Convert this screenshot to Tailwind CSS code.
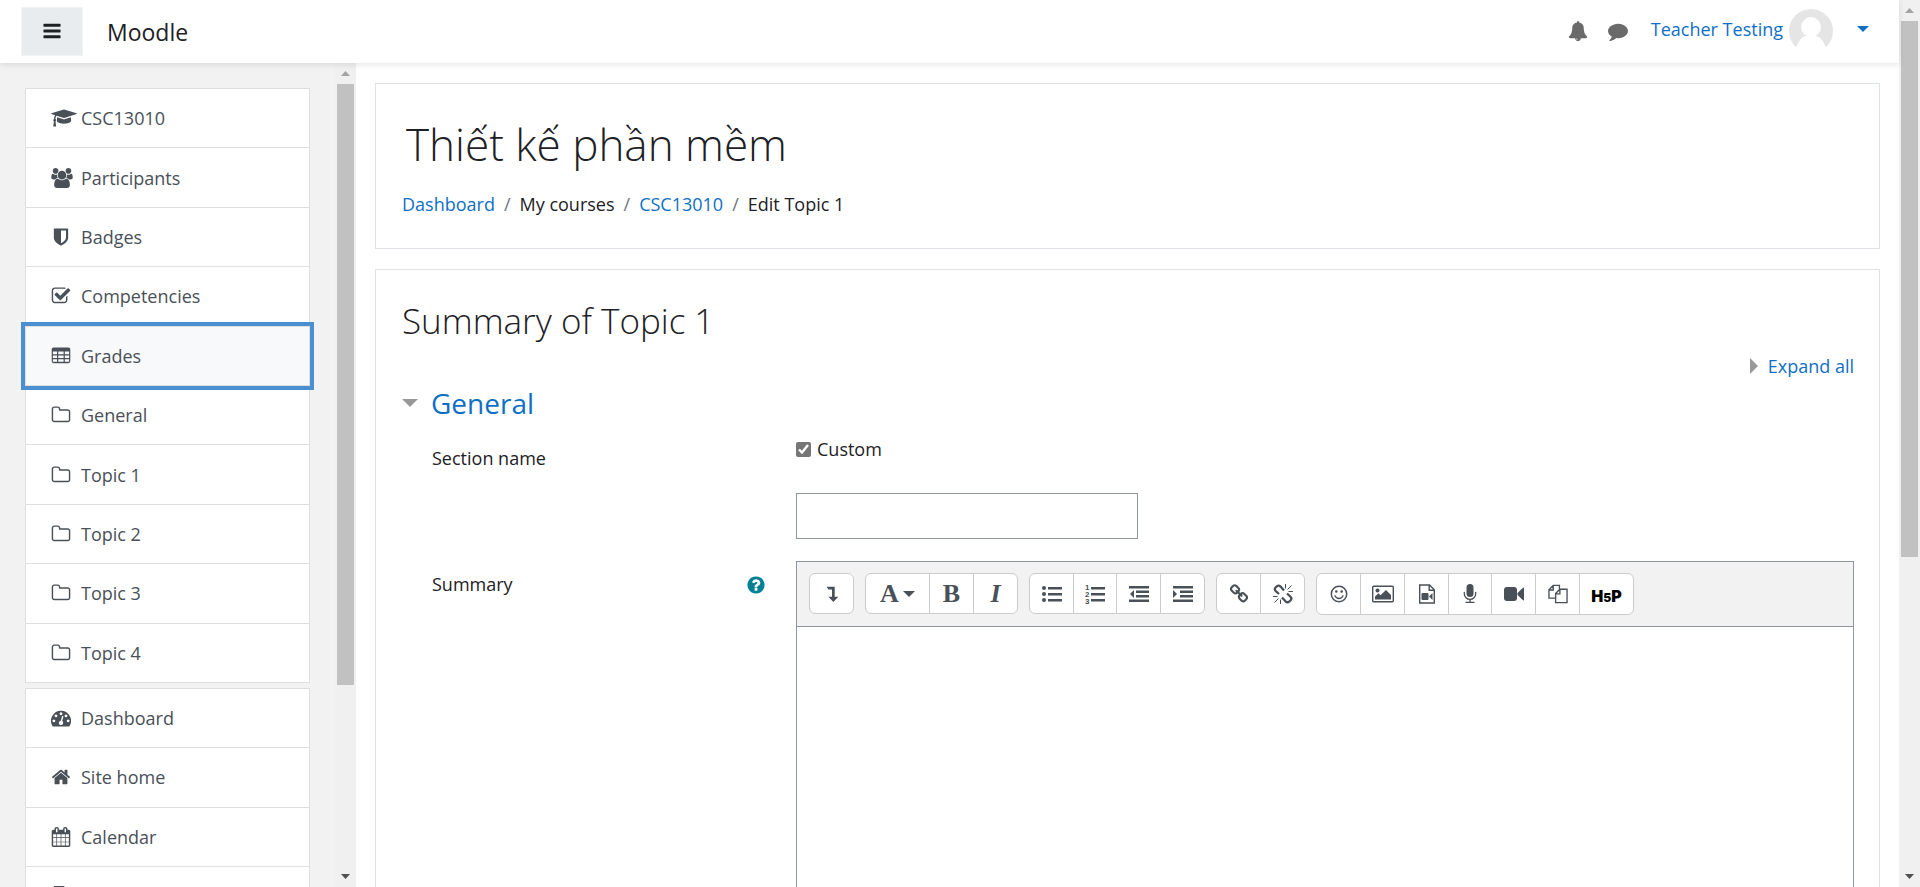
<!DOCTYPE html>
<html lang="en">
<head>
<meta charset="utf-8">
<meta name="viewport" content="width=device-width, initial-scale=1">
<title>Edit Topic 1</title>
<script src="https://cdn.jsdelivr.net/npm/@tailwindcss/browser@4"></script>
</head>
<body class="flex h-screen overflow-hidden bg-white font-['Open_Sans','Noto_Sans',sans-serif] text-lg leading-7 text-[#1d2125]">

<svg class="hidden" aria-hidden="true">
  <symbol id="bars" viewBox="0 0 1792 1792"><path d="M1664 1344v128q0 26-19 45t-45 19h-1408q-26 0-45-19t-19-45v-128q0-26 19-45t45-19h1408q26 0 45 19t19 45zm0-512v128q0 26-19 45t-45 19h-1408q-26 0-45-19t-19-45v-128q0-26 19-45t45-19h1408q26 0 45 19t19 45zm0-512v128q0 26-19 45t-45 19h-1408q-26 0-45-19t-19-45v-128q0-26 19-45t45-19h1408q26 0 45 19t19 45z"/></symbol>
  <symbol id="cap" viewBox="0 0 2304 1792"><path d="M1774 836l18 316q4 69-82 128t-235 93.5-323 34.5-323-34.5-235-93.5-82-128l18-316 574 181q22 7 48 7t48-7zm530-324q0 23-22 31l-1120 352q-4 1-10 1t-10-1l-652-206q-43 34-71 111.500t-34 178.500q63 36 63 109 0 69-58 107l58 433q2 14-8 25-9 11-24 11h-192q-15 0-24-11-10-11-8-25l58-433q-58-38-58-107 0-73 65-111 11-207 98-330l-333-104q-22-8-22-31t22-31l1120-352q4-1 10-1t10 1l1120 352q22 8 22 31z"/></symbol>
  <symbol id="users" viewBox="-64 0 1920 1792"><path d="M529 896q-162 5-265 128h-134q-82 0-138-40.500t-56-118.500q0-353 124-353 6 0 43.500 21t97.500 42.500 119 21.500q67 0 133-23-5 37-5 66 0 139 81 256zm1071 637q0 120-73 189.500t-194 69.500h-874q-121 0-194-69.500t-73-189.500q0-53 3.500-103.500t14-109 26.500-108.500 43-97.500 62-81 85.500-53.500 111.500-20q10 0 43 21.500t73 48 107 48 135 21.500 135-21.500 107-48 73-48 43-21.500q61 0 111.500 20t85.500 53.500 62 81 43 97.500 26.500 108.500 14 109 3.500 103.500zm-1024-1277q0 106-75 181t-181 75-181-75-75-181 75-181 181-75 181 75 75 181zm704 384q0 159-112.500 271.500t-271.500 112.500-271.500-112.500-112.500-271.500 112.500-271.500 271.500-112.500 271.500 112.500 112.500 271.500zm576 225q0 78-56 118.500t-138 40.500h-134q-103-123-265-128 81-117 81-256 0-29-5-66 66 23 133 23 59 0 119-21.500t97.500-42.500 43.500-21q124 0 124 353zm-128-609q0 106-75 181t-181 75-181-75-75-181 75-181 181-75 181 75 75 181z"/></symbol>
  <symbol id="shield" viewBox="0 0 1792 1792"><path d="M1344 960v-640h-448v1137q119-63 213-137 235-184 235-360zm192-768v768q0 86-33.500 170.500t-83 150-118 127.500-126.500 103-121 77.500-89.500 49.500-42.500 20q-12 6-26 6t-26-6q-16-7-42.500-20t-89.500-49.500-121-77.500-126.500-103-118-127.500-83-150-33.500-170.500v-768q0-26 19-45t45-19h1152q26 0 45 19t19 45z"/></symbol>
  <symbol id="check" viewBox="0 0 1792 1792"><path d="M1472 930v318q0 119-84.500 203.500t-203.500 84.500h-832q-119 0-203.500-84.500t-84.500-203.500v-832q0-119 84.500-203.500t203.500-84.500h832q63 0 117 25 15 7 18 23 3 17-9 29l-49 49q-10 10-23 10-3 0-9-2-23-6-45-6h-832q-66 0-113 47t-47 113v832q0 66 47 113t113 47h832q66 0 113-47t47-113v-254q0-13 9-22l64-64q10-10 23-10 6 0 12 3 20 8 20 29zm231-489l-814 814q-24 24-57 24t-57-24l-430-430q-24-24-24-57t24-57l110-110q24-24 57-24t57 24l263 263 647-647q24-24 57-24t57 24l110 110q24 24 24 57t-24 57z"/></symbol>
  <symbol id="table" viewBox="0 0 1792 1792"><path fill-rule="evenodd" d="M224 128h1344q160 0 160 160v1088q0 160-160 160h-1344q-160 0-160-160v-1088q0-160 160-160zM170 500v240h370v-240zM650 500v240h480v-240zM1240 500v240h380v-240zM170 840v240h370v-240zM650 840v240h480v-240zM1240 840v240h380v-240zM170 1180v240h370v-240zM650 1180v240h480v-240zM1240 1180v240h380v-240z"/></symbol>
  <symbol id="folder" viewBox="0 0 1792 1792"><path d="M1600 1312v-704q0-40-28-68t-68-28h-704q-40 0-68-28t-28-68v-64q0-40-28-68t-68-28h-320q-40 0-68 28t-28 68v960q0 40 28 68t68 28h1216q40 0 68-28t28-68zm128-704v704q0 92-66 158t-158 66h-1216q-92 0-158-66t-66-158v-960q0-92 66-158t158-66h320q92 0 158 66t66 158v32h672q92 0 158 66t66 158z"/></symbol>
  <symbol id="dash" viewBox="0 0 1792 1792"><path fill-rule="evenodd" d="M896 256a896 896 0 0 1 755 1378q-19 30-54 30h-1402q-35 0-54-30A896 896 0 0 1 896 256zM256 1024a128 128 0 1 0 1 0zM448 576a128 128 0 1 0 1 0zM896 384a128 128 0 1 0 1 0zM1344 576a128 128 0 1 0 1 0zM1536 1024a128 128 0 1 0 1 0zM1004 1173l101-382q6-26-7.500-48.500t-38.500-29.500-48 6.500-30 39.500l-101 382q-60 5-107 43.500t-63 98.500q-20 77 20 146t117 89 146-20 89-117q16-60-6-117t-72-91z"/></symbol>
  <symbol id="home" viewBox="0 0 1792 1792"><path d="M1472 992v480q0 26-19 45t-45 19h-384v-384h-256v384h-384q-26 0-45-19t-19-45v-480l576-480 575 474q1 2 1 6zm223-69l-62 74q-8 9-21 11h-3q-13 0-21-7l-692-577-692 577q-12 8-24 7-13-2-21-11l-62-74q-8-10-7-23.500t11-21.500l719-599q32-26 76-26t76 26l244 204v-195q0-14 9-23t23-9h192q14 0 23 9t9 23v408l219 182q10 8 11 21.500t-7 23.500z"/></symbol>
  <symbol id="calendar" viewBox="0 0 1792 1792"><path d="M192 1664h288v-288h-288v288zm352 0h320v-288h-320v288zm-352-352h288v-320h-288v320zm352 0h320v-320h-320v320zm-352-384h288v-288h-288v288zm736 736h320v-288h-320v288zm-384-736h320v-288h-320v288zm768 736h288v-288h-288v288zm-384-352h320v-320h-320v320zm-352-864v-288q0-13-9.500-22.500t-22.500-9.500h-64q-13 0-22.500 9.500t-9.500 22.500v288q0 13 9.500 22.500t22.500 9.500h64q13 0 22.500-9.500t9.500-22.500zm736 864h288v-320h-288v320zm-384-384h320v-288h-320v288zm384 0h288v-288h-288v288zm32-480v-288q0-13-9.500-22.500t-22.500-9.500h-64q-13 0-22.500 9.500t-9.500 22.500v288q0 13 9.500 22.500t22.500 9.500h64q13 0 22.500-9.500t9.500-22.500zm384-64v1280q0 52-38 90t-90 38h-1408q-52 0-90-38t-38-90v-1280q0-52 38-90t90-38h128v-96q0-66 47-113t113-47h64q66 0 113 47t47 113v96h384v-96q0-66 47-113t113-47h64q66 0 113 47t47 113v96h128q52 0 90 38t38 90z"/></symbol>
  <symbol id="file" viewBox="0 0 1792 1792"><path d="M256 0h896l384 384v1344h-1280zM384 160v1440h1024v-1088h-384v-352z" fill-rule="evenodd"/></symbol>
  <symbol id="bell" viewBox="0 0 1792 1792"><path d="M912 1696q0-16-16-16-59 0-101.500-42.500t-42.500-101.500q0-16-16-16t-16 16q0 73 51.500 124.500t124.500 51.500q16 0 16-16zm816-288q0 52-38 90t-90 38h-448q0 106-75 181t-181 75-181-75-75-181h-448q-52 0-90-38t-38-90q50-42 91-88t85-119.500 74.500-158.500 50-206 19.500-260q0-152 117-282.500t307-158.500q-8-19-8-39 0-40 28-68t68-28 68 28 28 68q0 20-8 39 190 28 307 158.500t117 282.500q0 139 19.500 260t50 206 74.500 158.500 85 119.500 91 88z"/></symbol>
  <symbol id="comment" viewBox="0 0 1792 1792"><path d="M1792 896q0 174-120 321.500t-326 233-450 85.500q-70 0-145-8-198 175-460 242-49 14-114 22-17 2-30.500-9t-17.500-29v-1q-3-4-.5-12t2-10 4.500-9.500l6-9 7-8.500 8-9q7-8 31-34.500t34.500-38 31-39.500 32.500-51 27-59 26-76q-157-89-247.500-220t-90.500-281q0-130 71-248.500t191-204.500 286-136.500 348-50.500q244 0 450 85.500t326 233 120 321.500z"/></symbol>
  <symbol id="help" viewBox="0 0 1792 1792"><path d="M1024 1376v-192q0-14-9-23t-23-9h-192q-14 0-23 9t-9 23v192q0 14 9 23t23 9h192q14 0 23-9t9-23zm256-672q0-88-55.500-163t-138.500-116-170-41q-243 0-371 213-15 24 8 42l132 100q7 6 19 6 16 0 25-12 53-68 86-92 34-24 86-24 48 0 85.500 26t37.500 59q0 38-20 61t-68 45q-63 28-115.500 86.500t-52.500 125.500v36q0 14 9 23t23 9h192q14 0 23-9t9-23q0-19 21.500-49.500t54.500-49.500q32-18 49-28.500t46-35 44.500-48 28-60.500 12.500-81zm384 192q0 209-103 385.500t-279.500 279.500-385.500 103-385.500-103-279.500-279.500-103-385.500 103-385.500 279.500-279.500 385.500-103 385.500 103 279.500 279.500 103 385.500z"/></symbol>
  <symbol id="down" viewBox="0 0 20 20"><path d="M4 2h9v11h4l-5.500 6L6 13h4V5H6z"/></symbol>
  <symbol id="ul" viewBox="0 0 20 20"><circle cx="2" cy="4" r="2"/><circle cx="2" cy="10" r="2"/><circle cx="2" cy="16" r="2"/><path d="M6 3h14v2.500H6zM6 9h14v2.500H6zM6 15h14v2.500H6z"/></symbol>
  <symbol id="ol" viewBox="0 0 20 20"><path d="M6 3h14v2.500H6zM6 9h14v2.500H6zM6 15h14v2.500H6z"/><g font-family="Liberation Sans" font-weight="700" font-size="8"><text x="0" y="6">1</text><text x="0" y="13">2</text><text x="0" y="20">3</text></g></symbol>
  <symbol id="outdent" viewBox="0 0 20 20"><path d="M0 2h20v2.500H0zM7 6.500h13V9H7zM7 11h13v2.500H7zM0 15.500h20V18H0zM5 6v8L1 10z"/></symbol>
  <symbol id="indent" viewBox="0 0 20 20"><path d="M0 2h20v2.500H0zM7 6.500h13V9H7zM7 11h13v2.500H7zM0 15.500h20V18H0zM0 6v8l4-4z"/></symbol>
  <symbol id="link" viewBox="0 0 1792 1792"><path d="M1520 1216q0-40-28-68l-208-208q-28-28-68-28-42 0-72 32 3 3 19 18.500t21.500 21.500 15 19 13 25.500 3.500 27.500q0 40-28 68t-68 28q-15 0-27.500-3.500t-25.500-13-19-15-21.500-21.500-18.500-19q-33 31-33 73 0 40 28 68l206 207q27 27 68 27 40 0 68-26l147-146q28-28 28-67zm-703-705q0-40-28-68l-206-207q-28-28-68-28-39 0-68 27l-147 146q-28 28-28 67 0 40 28 68l208 208q27 27 68 27 42 0 72-31-3-3-19-18.500t-21.500-21.500-15-19-13-25.500-3.500-27.500q0-40 28-68t68-28q15 0 27.500 3.500t25.500 13 19 15 21.500 21.500 18.500 19q33-31 33-73zm895 705q0 120-85 203l-147 146q-83 83-203 83-121 0-204-85l-206-207q-83-83-83-203 0-123 88-209l-88-88q-86 88-208 88-120 0-204-84l-208-208q-84-84-84-204t85-203l147-146q83-83 203-83 121 0 204 85l206 207q83 83 83 203 0 123-88 209l88 88q86-88 208-88 120 0 204 84l208 208q84 84 84 204z"/></symbol>
  <symbol id="unlink" viewBox="0 0 20 20"><g fill="none" stroke="currentColor"><path stroke-width="2.300" d="M6 10 2.700 7Q1 5.200 2.600 3.500L4 2.200Q5.800.8 7.600 2.600L11 6.500M9 13.500l3.500 3.800q1.900 1.700 3.700.3l1.400-1.400q1.600-1.700-.1-3.500L14 9.500"/><path stroke-width="1" d="M12.500 0v4.500M18.500 1.500l-4 4M15.500 7.500H20M7.500 15.500V20M5.500 14.500l-4 4M0 12.500h4.500"/></g></symbol>
  <symbol id="smile" viewBox="0 0 20 20"><circle cx="10" cy="10" r="7.700" fill="none" stroke="currentColor" stroke-width="1.500"/><circle cx="7.300" cy="7.500" r="1.300"/><circle cx="12.700" cy="7.500" r="1.300"/><path d="M6 11.800q1.200 2.700 4 2.700t4-2.700" fill="none" stroke="currentColor" stroke-width="1.300" stroke-linecap="round"/></symbol>
  <symbol id="image" viewBox="0 0 22 20"><rect x=".7" y="2.200" width="20.600" height="15.600" rx="1" fill="none" stroke="currentColor" stroke-width="1.400"/><circle cx="5.500" cy="6.500" r="2"/><path d="M3 15.500v-3l3.500-3.200 2 2L14 6l5 5v4.500z"/></symbol>
  <symbol id="filevideo" viewBox="0 0 20 20"><path d="M2.700 1h9.800l4.800 4.800V19H2.700zM12.200 1v5.200h5" fill="none" stroke="currentColor" stroke-width="1.400"/><rect x="4.500" y="9" width="7" height="7" rx="1"/><path d="M12 12.500 15.500 9v7z"/></symbol>
  <symbol id="mic" viewBox="0 0 20 20"><rect x="6.500" y="0" width="7" height="13" rx="3.500"/><path d="M4.300 8.500v1.200a5.700 5.700 0 0 0 11.400 0V8.500M10 15.500V18M6 18.300h8" fill="none" stroke="currentColor" stroke-width="1.300" stroke-linecap="round"/></symbol>
  <symbol id="video" viewBox="0 0 20 20"><rect x="0" y="3" width="13" height="14" rx="3"/><path d="M13.500 9 19 3.800q1-.6 1 .5v11.400q0 1.100-1 .5L13.500 11z"/></symbol>
  <symbol id="files" viewBox="0 0 21 20"><path d="M7.500 14.300H1V5.500L5.500 1H12v4M5.500 1v4.800H1M8 9.500 12.500 5H20v14H8zM12.500 5v4.800H8" fill="none" stroke="currentColor" stroke-width="1.400"/></symbol>
</svg>

<div class="flex min-w-0 flex-1 flex-col">
  <header class="z-10 flex h-[63px] shrink-0 items-center bg-white pl-[21px] pr-[30px] shadow-[0_2px_6px_rgba(0,0,0,0.1)]">
    <button class="mb-px flex h-[49px] w-[62px] items-center justify-center border border-[#f0f2f4] bg-[#e9ecef]" aria-label="Side panel"><svg class="size-5 fill-current"><use href="#bars"/></svg></button>
    <a href="#" class="ml-6 text-[23px]">Moodle</a>
    <div class="ml-auto flex items-center pb-px">
      <button class="text-[#6a6a6a]" aria-label="Notifications"><svg class="size-5 fill-current"><use href="#bell"/></svg></button>
      <button class="ml-5 text-[#6a6a6a]" aria-label="Messages"><svg class="size-5 fill-current"><use href="#comment"/></svg></button>
      <a href="#" class="ml-[23px] flex items-center gap-[6px] text-[#0f6fc5]"><span class="-mt-1">Teacher Testing</span>
        <svg class="size-11" viewBox="0 0 44 44"><defs><clipPath id="disc"><path d="M0 0h44v38H0z"/></clipPath></defs><g clip-path="url(#disc)"><circle cx="22" cy="22" r="22" fill="#e5e5e5"/><circle cx="22" cy="18" r="10" fill="#fff"/><path d="M7 40q3-14 15-14t15 14z" fill="#fff"/></g></svg></a>
      <button class="ml-6 mb-1 text-[#0f6fc5]" aria-label="User menu"><svg class="h-[6px] w-3 fill-current" viewBox="0 0 12 6"><path d="M0 0h12L6 6z"/></svg></button>
    </div>
  </header>

  <div class="flex min-h-0 flex-1">
    <aside class="flex w-[356px] shrink-0 bg-[#f2f2f2]">
      <nav class="flex flex-1 flex-col gap-[5px] overflow-hidden pl-[25px] pr-[25px] pt-[25px] text-[#495057]" aria-label="Navigation">
        <ul class="flex min-h-[595px] flex-col divide-y divide-[#dfdfdf] border border-[#dfdfdf] bg-white">
          <li class="flex flex-1"><a href="#" class="flex flex-1 items-center pl-6"><span class="flex w-[31px] items-center pl-px"><svg class="h-5 w-[26px] shrink-0 fill-current"><use href="#cap"/></svg></span>CSC13010</a></li>
          <li class="flex flex-1"><a href="#" class="flex flex-1 items-center pl-6"><span class="flex w-[31px] items-center pl-px"><svg class="h-5 w-[22px] fill-current"><use href="#users"/></svg></span>Participants</a></li>
          <li class="flex flex-1"><a href="#" class="flex flex-1 items-center pl-6"><span class="flex w-[31px] items-center pl-px"><svg class="size-5 fill-current"><use href="#shield"/></svg></span>Badges</a></li>
          <li class="flex flex-1"><a href="#" class="flex flex-1 items-center pl-6"><span class="flex w-[31px] items-center pl-px"><svg class="size-5 fill-current"><use href="#check"/></svg></span>Competencies</a></li>
          <li class="z-10 -mx-px -mt-px flex flex-1 border-x border-t border-[#dfdfdf] bg-[#f8f9fa] outline-4 outline-[#4a90d0]"><a href="#" class="flex flex-1 items-center pl-6"><span class="flex w-[31px] items-center pl-px"><svg class="size-5 fill-current"><use href="#table"/></svg></span>Grades</a></li>
          <li class="flex flex-1"><a href="#" class="flex flex-1 items-center pl-6"><span class="flex w-[31px] items-center pl-px"><svg class="size-5 fill-current"><use href="#folder"/></svg></span>General</a></li>
          <li class="flex flex-1"><a href="#" class="flex flex-1 items-center pl-6"><span class="flex w-[31px] items-center pl-px"><svg class="size-5 fill-current"><use href="#folder"/></svg></span>Topic 1</a></li>
          <li class="flex flex-1"><a href="#" class="flex flex-1 items-center pl-6"><span class="flex w-[31px] items-center pl-px"><svg class="size-5 fill-current"><use href="#folder"/></svg></span>Topic 2</a></li>
          <li class="flex flex-1"><a href="#" class="flex flex-1 items-center pl-6"><span class="flex w-[31px] items-center pl-px"><svg class="size-5 fill-current"><use href="#folder"/></svg></span>Topic 3</a></li>
          <li class="flex flex-1"><a href="#" class="flex flex-1 items-center pl-6"><span class="flex w-[31px] items-center pl-px"><svg class="size-5 fill-current"><use href="#folder"/></svg></span>Topic 4</a></li>
        </ul>
        <ul class="flex min-h-[238px] flex-col divide-y divide-[#dfdfdf] border border-[#dfdfdf] bg-white">
          <li class="flex flex-1"><a href="#" class="flex flex-1 items-center pl-6"><span class="flex w-[31px] items-center pl-px"><svg class="size-5 fill-current"><use href="#dash"/></svg></span>Dashboard</a></li>
          <li class="flex flex-1"><a href="#" class="flex flex-1 items-center pl-6"><span class="flex w-[31px] items-center pl-px"><svg class="size-5 fill-current"><use href="#home"/></svg></span>Site home</a></li>
          <li class="flex flex-1"><a href="#" class="flex flex-1 items-center pl-6"><span class="flex w-[31px] items-center pl-px"><svg class="size-5 fill-current"><use href="#calendar"/></svg></span>Calendar</a></li>
          <li class="flex flex-1"><a href="#" class="flex flex-1 items-center pl-6" aria-label="Private files"><span class="flex w-[31px] items-center pl-px"><svg class="size-5 fill-current"><use href="#file"/></svg></span></a></li>
        </ul>
      </nav>
      <div class="flex w-[21px] flex-col items-center bg-[#f0f0f0]" aria-hidden="true">
        <svg class="my-2 h-[5px] w-[9px] shrink-0 fill-[#a3a3a3]" viewBox="0 0 9 5"><path d="M4.500 0 9 5H0z"/></svg>
        <div class="h-[601px] w-[17px] shrink-0 bg-[#c1c1c1]"></div>
        <svg class="mb-2 mt-auto h-[5px] w-[9px] shrink-0 fill-[#505050]" viewBox="0 0 9 5"><path d="M0 0h9L4.500 5z"/></svg>
      </div>
    </aside>

    <main class="flex min-w-0 flex-1 flex-col gap-5 overflow-hidden px-[19px] pt-5">
      <section class="shrink-0 border border-[#dee2e6] px-[26px] pb-6 pt-[30px]">
        <h1 class="ml-1 text-[44px] font-light leading-[60px]">Thiết kế phần mềm</h1>
        <nav class="mb-[6px] mt-4 flex gap-[9px] leading-7" aria-label="Breadcrumb">
          <a href="#" class="text-[#0f6fc5]">Dashboard</a><span class="text-[#6c757d]">/</span><span>My courses</span><span class="text-[#6c757d]">/</span><a href="#" class="text-[#0f6fc5]">CSC13010</a><span class="text-[#6c757d]">/</span><span>Edit Topic 1</span>
        </nav>
      </section>

      <section class="flex flex-1 flex-col border border-b-0 border-[#dee2e6] pl-[26px] pr-[25px] pt-[28px]">
        <h2 class="text-[35px] font-light leading-[46px]">Summary of Topic 1</h2>
        <div class="mt-2 flex items-center justify-end gap-[10px]">
          <svg class="h-4 w-2 fill-[#999]" viewBox="0 0 8 16"><path d="M0 0l8 8-8 8z"/></svg>
          <a href="#" class="text-[#0f6fc5]">Expand all</a>
        </div>
        <h3 class="mt-[5px] flex items-center gap-[13px] text-[28px] leading-9"><svg class="h-2 w-4 fill-[#999]" viewBox="0 0 16 8"><path d="M0 0h16L8 8z"/></svg><a href="#" class="text-[#0f6fc5]">General</a></h3>

        <form class="mt-[11px] grid flex-1 grid-cols-[364px_minmax(0,1fr)] grid-rows-[auto_1fr] gap-y-[22px] pl-[30px]">
          <label for="name" class="pt-3">Section name</label>
          <div>
            <div class="flex items-center gap-[6px] pt-[3px]"><input id="custom" type="checkbox" checked class="size-[15px] accent-[#767676]"><label for="custom">Custom</label></div>
            <input id="name" type="text" class="mt-[30px] block h-[46px] w-[342px] border border-[#8f959e] bg-white px-3">
          </div>
          <div class="flex items-start justify-between pr-[30px] pt-[9px]"><label for="summary">Summary</label><button type="button" class="mt-[5px] text-[#008196]" aria-label="Help with Summary"><svg class="size-5 fill-current"><use href="#help"/></svg></button></div>
          <div class="flex flex-col border border-b-0 border-[#8f959e]">
            <div class="flex h-[65px] shrink-0 items-start gap-[11px] border-b border-[#8f959e] bg-[#f2f2f2] px-3 pt-[11px] text-[#495057]">
              <div class="flex h-[41px] divide-x divide-[#ccc] rounded-md border border-[#ccc] bg-white">
                <button type="button" class="flex w-[43px] items-center justify-center" aria-label="Show more buttons"><svg class="size-[18px] fill-current"><use href="#down"/></svg></button>
              </div>
              <div class="flex h-[41px] divide-x divide-[#ccc] rounded-md border border-[#ccc] bg-white font-['Liberation_Serif',serif] text-[26px] font-bold">
                <button type="button" class="flex w-16 items-center justify-center gap-1" aria-label="Paragraph styles"><span>A</span><svg class="h-[6px] w-3 fill-current" viewBox="0 0 12 6"><path d="M0 0h12L6 6z"/></svg></button>
                <button type="button" class="w-11" aria-label="Bold">B</button>
                <button type="button" class="w-[43px] italic" aria-label="Italic">I</button>
              </div>
              <div class="flex h-[41px] divide-x divide-[#ccc] rounded-md border border-[#ccc] bg-white">
                <button type="button" class="flex w-11 items-center justify-center" aria-label="Unordered list"><svg class="size-5 fill-current"><use href="#ul"/></svg></button>
                <button type="button" class="flex w-[43px] items-center justify-center" aria-label="Ordered list"><svg class="size-5 fill-current"><use href="#ol"/></svg></button>
                <button type="button" class="flex w-11 items-center justify-center" aria-label="Outdent"><svg class="size-5 fill-current"><use href="#outdent"/></svg></button>
                <button type="button" class="flex w-[43px] items-center justify-center" aria-label="Indent"><svg class="size-5 fill-current"><use href="#indent"/></svg></button>
              </div>
              <div class="flex h-[41px] divide-x divide-[#ccc] rounded-md border border-[#ccc] bg-white">
                <button type="button" class="flex w-11 items-center justify-center" aria-label="Link"><svg class="size-5 fill-current"><use href="#link"/></svg></button>
                <button type="button" class="flex w-[43px] items-center justify-center" aria-label="Unlink"><svg class="size-5 fill-current"><use href="#unlink"/></svg></button>
              </div>
              <div class="flex h-[42px] divide-x divide-[#ccc] rounded-md border border-[#ccc] bg-white">
                <button type="button" class="flex w-11 items-center justify-center" aria-label="Emoji picker"><svg class="size-5 fill-current"><use href="#smile"/></svg></button>
                <button type="button" class="flex w-11 items-center justify-center" aria-label="Image"><svg class="h-5 w-[22px] fill-current"><use href="#image"/></svg></button>
                <button type="button" class="flex w-11 items-center justify-center" aria-label="Media"><svg class="size-5 fill-current"><use href="#filevideo"/></svg></button>
                <button type="button" class="flex w-[43px] items-center justify-center" aria-label="Record audio"><svg class="size-5 fill-current"><use href="#mic"/></svg></button>
                <button type="button" class="flex w-11 items-center justify-center" aria-label="Record video"><svg class="size-5 fill-current"><use href="#video"/></svg></button>
                <button type="button" class="flex w-11 items-center justify-center" aria-label="Manage files"><svg class="size-5 fill-current"><use href="#files"/></svg></button>
                <button type="button" class="w-[53px] pt-1 font-['Inter',sans-serif] text-base font-black text-black">H<span class="text-xs">5</span>P</button>
              </div>
            </div>
            <textarea id="summary" class="w-full flex-1 resize-none bg-white p-2 outline-none"></textarea>
          </div>
        </form>
      </section>
    </main>
  </div>
</div>

<div class="flex w-[21px] shrink-0 flex-col items-center bg-[#f0f0f0]" aria-hidden="true">
  <svg class="my-2 h-[5px] w-[9px] shrink-0 fill-[#a3a3a3]" viewBox="0 0 9 5"><path d="M4.500 0 9 5H0z"/></svg>
  <div class="h-[536px] w-[17px] shrink-0 bg-[#c1c1c1]"></div>
  <svg class="mb-2 mt-auto h-[5px] w-[9px] shrink-0 fill-[#505050]" viewBox="0 0 9 5"><path d="M0 0h9L4.500 5z"/></svg>
</div>
</body>
</html>
